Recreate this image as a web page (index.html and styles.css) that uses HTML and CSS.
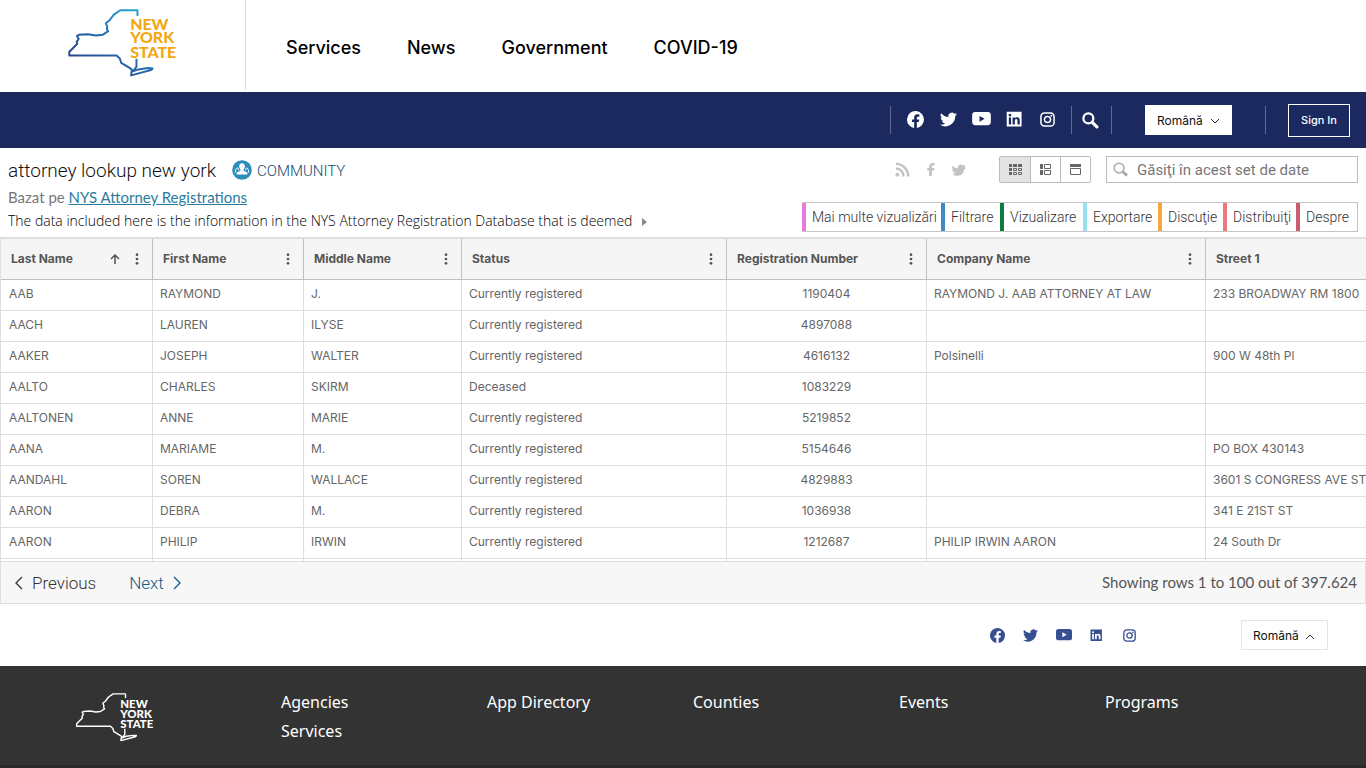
FILE: index.html
```html
<!DOCTYPE html>
<html lang="ro">
<head>
<meta charset="utf-8">
<meta name="viewport" content="width=device-width, initial-scale=1">
<title>attorney lookup new york</title>
<link rel="stylesheet" href="styles.css">
</head>
<body>
<svg class="defs" aria-hidden="true">
  <defs>
    <linearGradient id="ny-blue" x1="0" y1="1" x2="1" y2="0">
      <stop offset="0" stop-color="#27397c"/><stop offset="0.45" stop-color="#2764a8"/><stop offset="1" stop-color="#28b3d8"/>
    </linearGradient>
    <symbol id="facebook" viewBox="0 0 24 24"><path d="M24 12a12 12 0 1 0-13.9 11.9v-8.4H7.1V12h3V9.400c0-3 1.800-4.700 4.600-4.700 1.300 0 2.700.3 2.700.3v3h-1.500c-1.500 0-2 .9-2 1.900V12h3.400l-.6 3.500h-2.800v8.400A12 12 0 0 0 24 12z"/></symbol>
    <symbol id="twitter" viewBox="0 0 24 24"><path d="M24 4.600a10 10 0 0 1-2.800.8 5 5 0 0 0 2.200-2.700 10 10 0 0 1-3.100 1.200 4.900 4.900 0 0 0-8.400 4.500A14 14 0 0 1 1.700 3.100a4.900 4.900 0 0 0 1.500 6.600 5 5 0 0 1-2.200-.6c0 2.300 1.600 4.400 3.900 4.900a5 5 0 0 1-2.200.1 4.900 4.900 0 0 0 4.600 3.400A9.900 9.900 0 0 1 0 19.500 14 14 0 0 0 21.500 7.100 10 10 0 0 0 24 4.600z"/></symbol>
    <symbol id="youtube" viewBox="0 0 24 18"><path fill-rule="evenodd" d="M4 0h16q4 0 4 4v9q0 4-4 4H4q-4 0-4-4V4q0-4 4-4zm5.500 5v7.400l6.500-3.700z"/></symbol>
    <symbol id="linkedin" viewBox="0 0 24 24"><path fill-rule="evenodd" d="M1 1h21v21H1zM4 9v10h3.200V9zM5.600 4a1.900 1.900 0 1 0 0 3.800 1.900 1.900 0 0 0 0-3.800zM9.300 9v10h3.200v-5c0-1.400.4-2.600 2-2.600s1.700 1.500 1.700 2.700V19h3.200v-5.600c0-2.700-.7-4.700-3.800-4.700-1.500 0-2.600.8-3.100 1.600V9z"/></symbol>
    <symbol id="instagram" viewBox="0 0 24 24"><g fill="none" stroke="currentColor" stroke-width="2.400"><rect x="1.500" y="1.500" width="21" height="21" rx="5.500"/><circle cx="12" cy="12" r="4.900"/></g><circle cx="18.200" cy="5.900" r="1.500"/></symbol>
    <symbol id="search" viewBox="0 0 24 24"><path d="M14.500 14.500 21 21" fill="none" stroke="currentColor" stroke-width="4.500" stroke-linecap="round"/><circle cx="9" cy="9" r="7" fill="none" stroke="currentColor" stroke-width="3.200"/></symbol>
    <symbol id="dots" viewBox="0 0 4 14"><circle cx="2" cy="2" r="1.600"/><circle cx="2" cy="7" r="1.600"/><circle cx="2" cy="12" r="1.600"/></symbol>
    <symbol id="outline" viewBox="50 25 260 206"><path d="M262 48V31h-52l-19 13-13 17-11 9 4 10-1 8 4 6-17 11-20 2-24-4-27 2-6 3 5 9-6 9 2 6-20 20-4 4v11h142l10 9 4 13 28 17 4 4-2 17 60-16 6-5-15-1-29 4-17 6 11-14v-24" fill="none" stroke-linejoin="round"/></symbol>
  </defs>
</svg>

<header class="top">
  <a class="brand" href="#" aria-label="New York State">
    <svg class="logo" viewBox="50 25 340 206">
      <use href="#outline" x="50" y="25" width="260" height="206" stroke="url(#ny-blue)" stroke-width="6"/>
      <g class="logo-text logo-gold"><text x="240" y="90">NEW</text><text x="240" y="131">YORK</text><text x="240" y="174">STATE</text></g>
    </svg>
  </a>
  <nav class="main-nav">
    <a href="#">Services</a><a href="#">News</a><a href="#">Government</a><a href="#">COVID-19</a>
  </nav>
</header>

<div class="blue-bar">
  <div class="social social-top">
    <a href="#" aria-label="Facebook"><svg class="i17"><use href="#facebook"/></svg></a>
    <a href="#" aria-label="Twitter"><svg class="i17"><use href="#twitter"/></svg></a>
    <a href="#" aria-label="YouTube"><svg class="yt"><use href="#youtube"/></svg></a>
    <a href="#" aria-label="LinkedIn"><svg class="i17"><use href="#linkedin"/></svg></a>
    <a href="#" aria-label="Instagram"><svg class="i15"><use href="#instagram"/></svg></a>
  </div>
  <button class="search-btn" aria-label="Search"><svg class="i17"><use href="#search"/></svg></button>
  <div class="lang lang-top">
    <select aria-label="Limba"><option>Română</option></select>
    <svg class="chev" viewBox="0 0 10 6"><path d="m1 1 4 4 4-4"/></svg>
  </div>
  <div class="sign"><a class="sign-in" href="#">Sign In</a></div>
</div>

<main>
  <section class="info">
    <div class="info-left">
      <div class="title-row">
        <h1>attorney lookup new york</h1>
        <svg class="badge" viewBox="0 0 20 20"><circle cx="10" cy="10" r="9.800" fill="#2c8dbb"/><path fill="#fff" d="M10 3.200c1.800 0 2.800 1.200 2.800 3 0 1.500-.5 2.500-1.300 3.200l.3 1.700 3.600 1.500v2H4.600v-2l3.600-1.500.3-1.700C7.700 8.700 7.200 7.700 7.200 6.200c0-1.800 1-3 2.800-3z"/><path fill="none" stroke="#fff" d="M3.300 12.500c0-2 .8-4.500 2-4.500s1 1.500 1.500 2.500M16.700 12.500c0-2-.8-4.500-2-4.500s-1 1.500-1.500 2.500"/></svg>
        <span class="community">COMMUNITY</span>
      </div>
      <p class="based">Bazat pe <a href="#">NYS Attorney Registrations</a></p>
      <p class="desc">The data included here is the information in the NYS Attorney Registration Database that is deemed <span class="tri"></span></p>
    </div>
    <div class="info-right">
      <div class="tools">
        <div class="share">
          <a href="#" aria-label="RSS"><svg class="rss" viewBox="0 0 16 16"><circle cx="2.500" cy="13.500" r="2.100"/><path d="M1 7a8 8 0 0 1 8 8.500M1 2a13 13 0 0 1 13 13.500" fill="none" stroke="currentColor" stroke-width="2.600"/></svg></a>
          <a href="#" aria-label="Facebook"><svg class="fb" viewBox="0 0 8 14"><path d="M2 14V8H0V5.400h2V4c0-2.600 1.500-4 3.900-4H8v2.500H6.400C5.200 2.500 5 3 5 3.900v1.500h2.800L7.400 8H5v6z"/></svg></a>
          <a href="#" aria-label="Twitter"><svg class="tw" viewBox="0 0 14 12"><path d="M14 4.400 12.200 5c0 4-2.800 6.700-6.600 6.700-2.400 0-4.400-.8-5.100-2.300 1.200.3 2.300 0 3-.6C1.600 8.500.5 7.300 0 5.700l1.200.1C.1 4.800-.1 3.200.6 1.800 2 3.300 3.500 4 5.700 4.200 5.700 1.900 7 .4 9 .4c1 0 1.700.4 2.300 1l2-.5-.9 1.500 1.500-.1-1.200 1.300z"/></svg></a>
        </div>
        <div class="views">
          <button class="on" aria-label="Tabel"><svg width="13" height="11" viewBox="0 0 13 11"><path d="M0 0h3v3H0zM4 0h4v3H4zM9 0h4v3H9zM0 4h3v3H0zM0 8h3v3H0z"/><path d="M4.500 4.500h3v2h-3zM9.500 4.500h3v2h-3zM4.500 8.500h3v2h-3zM9.500 8.500h3v2h-3z" fill="none" stroke="currentColor"/></svg></button>
          <button aria-label="Listă"><svg width="11" height="11" viewBox="0 0 11 11"><path d="M0 0h3v5H0zM0 6h3v5H0z"/><path d="M4.500.5h6v4h-6zM4.500 6.500h6v4h-6z" fill="none" stroke="currentColor"/></svg></button>
          <button aria-label="Pagină"><svg width="11" height="11" viewBox="0 0 11 11"><path d="M0 0h11v3H0z"/><path d="M.5 4.500h10v6H.5z" fill="none" stroke="currentColor"/></svg></button>
        </div>
        <label class="find"><svg class="i15" viewBox="0 0 16 16"><circle cx="6.500" cy="6.500" r="5.200" fill="none" stroke="currentColor" stroke-width="1.700"/><path d="m10.500 10.500 4.500 4" stroke="currentColor" stroke-width="3"/></svg><input type="text" aria-label="Găsiţi în acest set de date" placeholder="Găsiţi în acest set de date"></label>
      </div>
      <div class="tabs">
        <button class="c-pink">Mai multe vizualizări</button><button class="c-blue">Filtrare</button><button class="c-green">Vizualizare</button><button class="c-cyan">Exportare</button><button class="c-orange">Discuţie</button><button class="c-coral">Distribuiţi</button><button class="c-red">Despre</button>
      </div>
    </div>
  </section>

  <div class="grid-wrap">
    <table>
      <colgroup><col class="w-last"><col class="w-first"><col class="w-middle"><col class="w-status"><col class="w-reg"><col class="w-company"><col class="w-street"></colgroup>
      <thead><tr>
        <th><div class="th"><span>Last Name</span><svg class="sort" viewBox="0 0 10 10"><path d="M5 10V1M1 5l4-4 4 4"/></svg><svg class="dots"><use href="#dots"/></svg></div></th>
        <th><div class="th"><span>First Name</span><svg class="dots"><use href="#dots"/></svg></div></th>
        <th><div class="th"><span>Middle Name</span><svg class="dots"><use href="#dots"/></svg></div></th>
        <th><div class="th"><span>Status</span><svg class="dots"><use href="#dots"/></svg></div></th>
        <th><div class="th"><span>Registration Number</span><svg class="dots"><use href="#dots"/></svg></div></th>
        <th><div class="th"><span>Company Name</span><svg class="dots"><use href="#dots"/></svg></div></th>
        <th><div class="th"><span>Street 1</span></div></th>
      </tr></thead>
      <tbody>
        <tr><td>AAB</td><td>RAYMOND</td><td>J.</td><td>Currently registered</td><td class="num">1190404</td><td>RAYMOND J. AAB ATTORNEY AT LAW</td><td>233 BROADWAY RM 1800</td></tr>
        <tr><td>AACH</td><td>LAUREN</td><td>ILYSE</td><td>Currently registered</td><td class="num">4897088</td><td></td><td></td></tr>
        <tr><td>AAKER</td><td>JOSEPH</td><td>WALTER</td><td>Currently registered</td><td class="num">4616132</td><td>Polsinelli</td><td>900 W 48th Pl</td></tr>
        <tr><td>AALTO</td><td>CHARLES</td><td>SKIRM</td><td>Deceased</td><td class="num">1083229</td><td></td><td></td></tr>
        <tr><td>AALTONEN</td><td>ANNE</td><td>MARIE</td><td>Currently registered</td><td class="num">5219852</td><td></td><td></td></tr>
        <tr><td>AANA</td><td>MARIAME</td><td>M.</td><td>Currently registered</td><td class="num">5154646</td><td></td><td>PO BOX 430143</td></tr>
        <tr><td>AANDAHL</td><td>SOREN</td><td>WALLACE</td><td>Currently registered</td><td class="num">4829883</td><td></td><td>3601 S CONGRESS AVE ST</td></tr>
        <tr><td>AARON</td><td>DEBRA</td><td>M.</td><td>Currently registered</td><td class="num">1036938</td><td></td><td>341 E 21ST ST</td></tr>
        <tr><td>AARON</td><td>PHILIP</td><td>IRWIN</td><td>Currently registered</td><td class="num">1212687</td><td>PHILIP IRWIN AARON</td><td>24 South Dr</td></tr>
        <tr class="peek"><td></td><td></td><td></td><td></td><td></td><td></td><td></td></tr>
      </tbody>
    </table>
  </div>
  <div class="pager">
    <button class="prev"><svg viewBox="0 0 8 14"><path d="M7 1 1 7l6 6"/></svg>Previous</button>
    <button class="next">Next<svg viewBox="0 0 8 14"><path d="m1 1 6 6-6 6"/></svg></button>
    <span class="showing">Showing rows 1 to 100 out of 397.624</span>
  </div>
</main>

<div class="social-strip">
  <div class="social social-low">
    <a href="#" aria-label="Facebook"><svg class="i15"><use href="#facebook"/></svg></a>
    <a href="#" aria-label="Twitter"><svg class="i15"><use href="#twitter"/></svg></a>
    <a href="#" aria-label="YouTube"><svg class="yt yt-low"><use href="#youtube"/></svg></a>
    <a href="#" aria-label="LinkedIn"><svg class="i13"><use href="#linkedin"/></svg></a>
    <a href="#" aria-label="Instagram"><svg class="i13"><use href="#instagram"/></svg></a>
  </div>
  <div class="lang lang-low">
    <select aria-label="Limba"><option>Română</option></select>
    <svg class="chev" viewBox="0 0 10 6"><path d="m1 5 4-4 4 4"/></svg>
  </div>
</div>

<footer>
  <a class="foot-brand" href="#" aria-label="New York State">
    <svg class="logo-low" viewBox="50 25 340 206">
      <use href="#outline" x="50" y="25" width="260" height="206" stroke="#fff" stroke-width="6"/>
      <g class="logo-text logo-white"><text x="240" y="90">NEW</text><text x="240" y="131">YORK</text><text x="240" y="174">STATE</text></g>
    </svg>
  </a>
  <nav class="foot-nav">
    <a href="#">Agencies</a><a href="#">App Directory</a><a href="#">Counties</a><a href="#">Events</a><a href="#">Programs</a><a href="#">Services</a>
  </nav>
</footer>
</body>
</html>
```
FILE: styles.css
```css
* { box-sizing: border-box; }
body { margin: 0; font-family: Lato, "Open Sans", sans-serif; color: #333; background: #fff; overflow-x: hidden; }
a { color: inherit; text-decoration: none; }
button { font: inherit; color: inherit; background: none; border: 0; padding: 0; cursor: pointer; }
svg { display: block; fill: currentColor; flex: none; }
h1, p { margin: 0; font-weight: 400; }
.defs { position: absolute; width: 0; height: 0; }
.i17 { width: 17px; height: 17px; }
.i15 { width: 15px; height: 15px; }
.i13 { width: 13px; height: 13px; }

.top { display: flex; height: 92px; }
.brand { width: 246px; height: 90px; border-right: 1px solid #ddd; padding: 8px 0 0 67px; }
.logo { width: 113px; height: 69px; overflow: visible; }
.logo-text { font-family: Lato, sans-serif; font-weight: 900; font-size: 48px; }
.logo-gold { fill: #f3a712; }
.logo-white { fill: #fff; }
.main-nav { display: flex; align-items: center; gap: 46px; padding: 0 0 0 40px; height: 95px; font-family: Inter, sans-serif; font-size: 18px; font-weight: 500; color: #000; }

.blue-bar { display: flex; justify-content: flex-end; align-items: center; height: 56px; padding-right: 16px; background: #1b295f; color: #fff; }
.social { display: flex; align-items: center; }
.social a { display: flex; justify-content: center; width: 33px; }
.social-top { height: 28px; border-left: 1px solid #5f6991; padding: 0 7px 0 8px; }
.social-top a { padding-bottom: 2px; }
.yt { width: 19px; height: 14px; }
.yt-low { width: 16px; height: 12px; }
.search-btn { display: flex; align-items: center; justify-content: center; width: 41px; height: 28px; padding-right: 2px; border: solid #5f6991; border-width: 0 1px; }
.lang { position: relative; height: 30px; width: 87px; }
.lang select { appearance: none; width: 100%; height: 100%; padding: 0 12px; border: 0; border-radius: 0; background: #fff; color: #111; font: 12px Inter, sans-serif; }
.lang .chev { position: absolute; right: 12px; top: 13px; width: 10px; height: 6px; fill: none; stroke: #333; pointer-events: none; }
.lang-top { margin: 0 33px; }
.sign { display: flex; align-items: center; height: 28px; padding-left: 22px; border-left: 1px solid #5f6991; }
.sign-in { border: 1px solid #fff; width: 62px; line-height: 31px; text-align: center; font-family: Inter, sans-serif; font-size: 11px; font-weight: 500; }

.info { display: flex; justify-content: space-between; height: 89px; padding: 8px 8px 0; }
.title-row { display: flex; align-items: center; height: 28px; font-family: Roboto, sans-serif; }
h1 { font-size: 19px; font-weight: 300; color: #111; }
.badge { width: 20px; height: 20px; margin: 0 5px 0 16px; }
.community { padding-top: 2px; font-size: 15px; font-weight: 300; color: #0f4a72; }
.based { font-size: 15px; line-height: 26px; color: #777; }
.based a { color: #2a7ba0; text-decoration: underline; }
.desc { font-family: "Open Sans", sans-serif; font-size: 14px; font-weight: 300; line-height: 22px; color: #000; white-space: nowrap; }
.tri { display: inline-block; margin-left: 6px; border: 4px solid transparent; border-left: 5px solid #888; border-right: 0; }
.tools { display: flex; justify-content: flex-end; align-items: center; height: 27px; }
.share { display: flex; align-items: center; gap: 17px; color: #c3c3c3; margin-right: 33px; }
.rss { width: 15px; height: 15px; }
.fb { width: 8px; height: 13px; }
.tw { width: 14px; height: 12px; }
.views { display: flex; height: 27px; border: 1px solid #bbb; border-radius: 2px; margin-right: 15px; }
.views button { display: flex; align-items: center; justify-content: center; width: 30px; color: #666; }
.views button + button { border-left: 1px solid #bbb; }
.views .on { background: #e3e3e3; }
.find { display: flex; align-items: center; gap: 9px; width: 252px; height: 27px; border: 1px solid #bbb; padding: 0 6px; color: #aaa; }
.find input { flex: 1; min-width: 0; border: 0; padding: 0; outline: 0; background: none; font: 15px Roboto, sans-serif; }
.find input::placeholder { color: #777; opacity: 1; }
.tabs { display: grid; grid-template-columns: 139px 59px 83px 75px 65px 73px 61px; justify-content: end; margin-top: 19px; height: 30px; border: solid #c4c4c4; border-width: 1px 1px 1px 0; }
.tabs button { border-left: 4px solid; padding: 0 0 0 6px; text-align: left; font-family: Roboto, sans-serif; font-size: 14px; font-weight: 300; white-space: nowrap; color: #333; }
.tabs .c-pink { border-color: #e879dd; }
.tabs .c-blue { border-color: #4189c7; }
.tabs .c-green { border-color: #0f7d3f; }
.tabs .c-cyan { border-color: #97e1f0; }
.tabs .c-orange { border-color: #f9a63a; }
.tabs .c-coral { border-color: #ee7780; }
.tabs .c-red { border-color: #cc5b6e; }

.grid-wrap { overflow: hidden; border-top: 2px solid #dedede; border-left: 1px solid #dedede; }
table { table-layout: fixed; width: 100%; min-width: 1365px; border-collapse: separate; border-spacing: 0; font-family: Inter, sans-serif; }
.w-last { width: 152px; }
.w-first { width: 151px; }
.w-middle { width: 158px; }
.w-status { width: 265px; }
.w-reg { width: 200px; }
.w-company { width: 279px; }
th { height: 41px; padding: 0 9px 0 10px; background: #f5f5f5; border: solid #bfbfbf; border-width: 0 1px 1px 0; color: #555; }
th:last-child, td:last-child { border-right: 0; }
.th { display: flex; align-items: center; font-size: 12px; line-height: 14px; font-weight: 700; }
.th span { flex: 1; text-align: left; white-space: nowrap; }
.dots { width: 4px; height: 12px; margin: 0 4px; }
.sort { width: 10px; height: 10px; margin-right: 11px; fill: none; stroke: #555; stroke-width: 1.500; }
td { height: 31px; padding: 0 0 2px 7px; border: solid #dedede; border-width: 0 1px 1px 0; font-size: 12px; line-height: 14px; color: #666; white-space: nowrap; overflow: hidden; }
td:first-child { padding-left: 8px; }
td.num { text-align: center; padding: 0 0 2px; }
.peek td { height: 2px; padding: 0; border-bottom: 0; }

.pager { display: flex; align-items: center; height: 43px; padding: 0 8px 0 14px; background: #f7f7f7; border: 1px solid #dedede; color: #555; }
.pager button { display: flex; align-items: center; gap: 9px; font-family: Roboto, sans-serif; font-size: 17px; font-weight: 300; color: #333; }
.pager svg { width: 8px; height: 14px; fill: none; stroke: currentColor; stroke-width: 1.300; }
.pager .next { margin-left: 33px; color: #0f5c87; }
.showing { margin-left: auto; padding-bottom: 2px; font-size: 15px; }

.social-strip { display: flex; justify-content: flex-end; align-items: center; height: 62px; padding-right: 38px; }
.social-low { color: #354f91; margin-right: 95px; }
.lang-low { border: 1px solid #e3e3e3; }
.lang-low select { padding: 0 11px; }

footer { display: flex; min-height: 102px; padding: 26px 55px 0 75px; background: #333; color: #fff; border-bottom: 3px solid #292929; }
.foot-brand { width: 206px; }
.logo-low { width: 81px; height: 50px; overflow: visible; }
.foot-nav { flex: 1; display: grid; grid-template-columns: repeat(5, 1fr); align-content: start; font-family: "Noto Sans", sans-serif; font-size: 16px; line-height: 29px; margin-top: -4px; }
```
